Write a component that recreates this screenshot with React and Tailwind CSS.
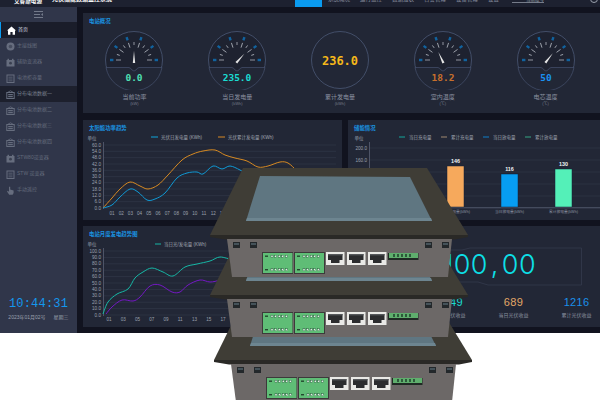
import { Fragment } from 'react';

const menuItems = [
  { label: '首页', icon: 'home', active: true },
  { label: '主接线图', icon: 'circle' },
  { label: '辅助变流器', icon: 'box' },
  { label: '电池柜容量', icon: 'cabinet' },
  { label: '分布电池数据一', icon: 'pack', dark: true },
  { label: '分布电池数据二', icon: 'pack' },
  { label: '分布电池数据三', icon: 'pack' },
  { label: '分布电池数据四', icon: 'pack' },
  { label: 'STW80逆变器', icon: 'box' },
  { label: 'STW 逆变器', icon: 'cabinet' },
  { label: '手动遥控', icon: 'hand' },
];

const gauges = [
  { value: '0.0', label: '当前功率', unit: '(kW)', color: '#4fe0b4', angle: 0 },
  { value: '235.0', label: '当日发电量', unit: '(kWh)', color: '#1adbd2', angle: 42 },
  { value: '236.0', label: '累计发电量', unit: '(kWh)', color: '#f6b81a', plain: true },
  { value: '18.2', label: '室内温度', unit: '(℃)', color: '#c8702c', angle: -25 },
  { value: '50', label: '电芯温度', unit: '(℃)', color: '#1a90f0', angle: 38 },
];

function MenuIcon({ type, active }) {
  const c = active ? '#ffffff' : '#666d7e';
  return (
    <svg width="9" height="9" viewBox="0 0 9 9" className="shrink-0">
      {type === 'home' && <path d="M4.5 .5 L9 4.6 L8 4.6 L8 8.8 L5.6 8.8 L5.6 6 L3.4 6 L3.4 8.8 L1 8.8 L1 4.6 L0 4.6 Z" fill={c} />}
      {type === 'circle' && (
        <g>
          <circle cx="4.5" cy="4.5" r="4" fill={c} />
          <circle cx="4.5" cy="4.5" r="1.8" fill="#474e60" />
        </g>
      )}
      {type === 'box' && (
        <g>
          <rect x=".5" y="2" width="8" height="6.5" fill={c} />
          <rect x="1.5" y=".8" width="1.5" height="1.4" fill={c} />
          <rect x="6" y=".8" width="1.5" height="1.4" fill={c} />
          <circle cx="4.5" cy="5.2" r="1.4" fill="#3a4051" />
        </g>
      )}
      {type === 'cabinet' && (
        <g>
          <rect x="1" y="1" width="7" height="7.5" fill="none" stroke={c} />
          <path d="M2.5 3.2 H6.5 M2.5 5 H6.5 M2.5 6.8 H6.5" stroke={c} strokeWidth=".7" />
        </g>
      )}
      {type === 'pack' && (
        <g>
          <path d="M1.5 2.5 L4.5 .8 L7.5 2.5" fill="none" stroke={c} strokeWidth=".8" />
          <rect x=".8" y="2.5" width="7.4" height="6" fill="none" stroke={c} />
          <rect x="2.2" y="4" width="4.6" height="1.2" fill={c} />
          <rect x="2.2" y="6" width="4.6" height="1.2" fill={c} />
        </g>
      )}
      {type === 'hand' && (
        <path d="M3 .8 H4.2 V3.6 L7.6 4.4 V7 L6.6 8.8 H3.2 L1 5.4 L1.8 4.8 L3 5.8 Z" fill={c} />
      )}
    </svg>
  );
}

function Sidebar() {
  return (
    <aside className="w-[77px] shrink-0 bg-[#30364a] flex flex-col">
      <div className="h-[15px] flex items-center justify-center">
        <svg width="9" height="7" viewBox="0 0 9 7">
          <path d="M0 .5 H9 M0 3.5 H6 M0 6.5 H9" stroke="#737a8a" fill="none" />
          <path d="M9 2 L7 3.5 L9 5 Z" fill="#737a8a" />
        </svg>
      </div>
      {menuItems.map((item) => (
        <div
          key={item.label}
          className={`h-[16px] flex items-center gap-[2px] pl-[6px] text-[5px] ${
            item.active
              ? 'bg-[#1a1d2a] border-l border-[#0a9bf0] pl-[5px] text-[#d8dbe2]'
              : item.dark
                ? 'bg-[#1d202d] text-[#7a8090]'
                : 'text-[#636a7b]'
          }`}
        >
          <MenuIcon type={item.icon} active={item.active} />
          <span className="whitespace-nowrap">{item.label}</span>
        </div>
      ))}
      <div className="mt-auto pb-[12px] flex flex-col items-center">
        <div className="font-['Liberation_Mono',monospace] text-[12px] leading-[14px] tracking-[0.2px] text-[#1497ee]">10:44:31</div>
        <div className="mt-[2px] flex gap-[8px] text-[5px] leading-[8px] text-[#9ba1ae]">
          <span>2023年01月02号</span>
          <span>星期三</span>
        </div>
      </div>
    </aside>
  );
}

function Gauge({ value, label, unit, color, angle, plain }) {
  const ticks = [];
  for (let a = -90; a <= 90; a += 18) ticks.push(a);
  const blue = [-90, -54, -18, 18, 54, 90];
  return (
    <div className="flex flex-col items-center">
      <svg width="60" height="60" viewBox="-30 -30 60 60">
        <circle r="28.5" fill={plain ? '#222736' : '#1e2230'} stroke="#46526e" strokeWidth=".9" />
        {!plain && (
          <Fragment>
            <path d="M-28 7.5 H-5 Q-3 8 -2 10 Q0 12 2 10 Q3 8 5 7.5 H28 A28.5 28.5 0 0 1 -28 7.5 Z" fill="#222736" stroke="#46526e" strokeWidth=".7" />
            {ticks.map((a) => (
              <line
                key={a}
                x1="0"
                y1={blue.includes(a) ? -13 : -15}
                x2="0"
                y2="-18"
                stroke="#aeb3bc"
                strokeWidth=".8"
                transform={`rotate(${a})`}
              />
            ))}
            {blue.map((a) => (
              <rect key={a} x="-1.2" y="-24" width="2.4" height="3.4" fill="#11639f" transform={`rotate(${a})`} />
            ))}
            <path d="M-1.2 3 L0 -9 L1.2 3 Z" fill="#e6e6e6" transform={`rotate(${angle} 0 2)`} />
            <text y="21" textAnchor="middle" fontSize="9.5" fontWeight="700" fill={color} className="font-['DejaVu_Sans_Mono',monospace]">
              {value}
            </text>
          </Fragment>
        )}
        {plain && (
          <text y="4.5" textAnchor="middle" fontSize="12" fontWeight="700" fill={color} className="font-['DejaVu_Sans_Mono',monospace]">
            {value}
          </text>
        )}
      </svg>
      <div className="mt-[3px] text-[6px] leading-[8px] text-[#8b91a0] whitespace-nowrap">{label}</div>
      <div className="text-[4px] leading-[6px] text-[#747a89]">{unit}</div>
    </div>
  );
}

function Card({ title, className = '', children }) {
  return (
    <section className={`relative bg-[#222736] overflow-hidden ${className}`}>
      <h2 className="h-[13px] pt-[3px] pl-[6px] text-[5.4px] leading-[10px] font-bold text-[#1a94e2] whitespace-nowrap">{title}</h2>
      {children}
    </section>
  );
}

// catmull-rom through the points read off the picture
function smooth(points) {
  let d = `M${points[0][0]} ${points[0][1]}`;
  for (let i = 0; i < points.length - 1; i++) {
    const p0 = points[i - 1] || points[i];
    const p1 = points[i];
    const p2 = points[i + 1];
    const p3 = points[i + 2] || p2;
    d += ` C${p1[0] + (p2[0] - p0[0]) / 6} ${p1[1] + (p2[1] - p0[1]) / 6} ${p2[0] - (p3[0] - p1[0]) / 6} ${p2[1] - (p3[1] - p1[1]) / 6} ${p2[0]} ${p2[1]}`;
  }
  return d;
}

const orange = [[103, 208], [112, 198], [120, 189], [130, 182], [140, 186], [148, 189], [158, 185], [168, 175], [182, 160], [193, 154], [203, 151], [215, 150], [225, 155], [235, 158], [247, 161], [258, 167], [268, 166], [280, 162], [288, 163], [296, 170]];
const blueLine = [[103, 208], [112, 205], [120, 197], [130, 189], [138, 192], [147, 200], [155, 199], [165, 193], [177, 178], [187, 173], [197, 172], [203, 174], [213, 166], [222, 169], [230, 166], [240, 170], [250, 176]];
const teal = [[103, 314], [108, 302], [117, 294], [128, 289], [135, 278], [143, 272], [152, 268], [163, 272], [173, 276], [185, 267], [197, 264], [210, 261], [220, 257], [232, 260]];
const purple = [[106, 314], [112, 307], [122, 300], [133, 301], [140, 297], [150, 286], [160, 285], [172, 292], [180, 292], [188, 285], [200, 280], [210, 282], [220, 280], [230, 276]];

function PowerChart() {
  const rows = [['60.0', 145], ['54.0', 151.3], ['48.0', 157.7], ['42.0', 164], ['36.0', 170.3], ['30.0', 176.7], ['24.0', 182.7], ['18.0', 189], ['12.0', 195.7], ['6.0', 201.7], ['0.0', 208]];
  const days = ['01', '02', '03', '04', '05', '06', '07', '08', '09', '10', '11', '12', '13', '14', '15', '16', '17', '18', '19', '20', '21', '22', '23', '24'];
  return (
    <svg width="259" height="87" viewBox="83 133 259 87" className="block">
      <text x="92" y="140" fontSize="4.5" fill="#9ba1ae" textAnchor="middle">单位</text>
      {rows.map(([t, y]) => (
        <Fragment key={t}>
          <line x1="104" x2="336" y1={y} y2={y} stroke="#343a4b" strokeWidth=".6" />
          <text x="101" y={y + 1.6} fontSize="4.6" fill="#9ba1ae" textAnchor="end">{t}</text>
        </Fragment>
      ))}
      <line x1="103.5" x2="103.5" y1="142" y2="209" stroke="#596073" strokeWidth=".8" />
      {days.map((t, i) => (
        <text key={t} x={112 + i * 9.2} y="214.5" fontSize="4.6" fill="#9ba1ae" textAnchor="middle">{t}</text>
      ))}
      <line x1="151" x2="158" y1="137" y2="137" stroke="#0fa6dc" />
      <text x="161" y="139" fontSize="4.5" fill="#a3a8b4">光伏日发电量 (KWh)</text>
      <line x1="218" x2="225" y1="137" y2="137" stroke="#d98a24" />
      <text x="228" y="139" fontSize="4.5" fill="#a3a8b4">光伏累计发电量 (KWh)</text>
      <path d={smooth(orange)} fill="none" stroke="#d78a22" strokeWidth="1" />
      <path d={smooth(blueLine)} fill="none" stroke="#0f9ad6" strokeWidth="1" />
    </svg>
  );
}

function MonthChart() {
  const rows = ['100.0', '90.0', '80.0', '70.0', '60.0', '50.0', '40.0', '30.0', '20.0', '10.0', '0.0'];
  const days = ['01', '03', '05', '07', '09', '11', '13', '15', '17', '19', '21', '23', '25', '27', '29', '31'];
  return (
    <svg width="259" height="88" viewBox="83 239 259 88" className="block">
      <text x="92" y="246" fontSize="4.5" fill="#9ba1ae" textAnchor="middle">单位</text>
      {rows.map((t, i) => (
        <Fragment key={t}>
          <line x1="104" x2="336" y1={251 + i * 6.4} y2={251 + i * 6.4} stroke="#343a4b" strokeWidth=".6" />
          <text x="101" y={252.6 + i * 6.4} fontSize="4.6" fill="#9ba1ae" textAnchor="end">{t}</text>
        </Fragment>
      ))}
      <line x1="103.5" x2="103.5" y1="248" y2="316" stroke="#596073" strokeWidth=".8" />
      {days.map((t, i) => (
        <text key={t} x={109 + i * 14.25} y="320.5" fontSize="4.6" fill="#9ba1ae" textAnchor="middle">{t}</text>
      ))}
      <line x1="155" x2="161" y1="244" y2="244" stroke="#16b5a4" />
      <text x="164" y="246" fontSize="4.5" fill="#a3a8b4">当日光/发电量 (KWh)</text>
      <path d={smooth(teal)} fill="none" stroke="#16b8a6" strokeWidth="1" />
      <path d={smooth(purple)} fill="none" stroke="#7418c4" strokeWidth="1" />
    </svg>
  );
}

function StorageChart() {
  const rows = [['200.0', 148], ['160.0', 160], ['120.0', 172], ['80.0', 184], ['40.0', 196], ['0.0', 207.5]];
  const legend = [
    [399, '#12a79b', '当日充电量'],
    [441, '#a08a70', '累计充电量'],
    [483, '#0f7ec8', '当日放电量'],
    [525, '#35a583', '累计放电量'],
  ];
  const bars = [
    { x: 393, top: 170, label: '', name: '当日充电量(kWh)', fill: '#12a79b' },
    { x: 447, top: 166, label: '146', name: '累计充电量(kWh)', fill: '#f6a95c' },
    { x: 501, top: 174, label: '116', name: '当日放电量(kWh)', fill: '#079df2' },
    { x: 555, top: 169, label: '130', name: '累计放电量(kWh)', fill: '#54f0b8' },
  ];
  return (
    <svg width="252" height="87" viewBox="348 133 252 87" className="block">
      <text x="359" y="140" fontSize="4.5" fill="#9ba1ae" textAnchor="middle">单位</text>
      {rows.map(([t, y]) => (
        <Fragment key={t}>
          <line x1="369" x2="600" y1={y} y2={y} stroke="#343a4b" strokeWidth=".6" />
          <text x="367" y={y + 1.6} fontSize="4.6" fill="#9ba1ae" textAnchor="end">{t}</text>
        </Fragment>
      ))}
      <line x1="369.5" x2="369.5" y1="142" y2="208" stroke="#596073" strokeWidth=".8" />
      <line x1="369" x2="600" y1="207.8" y2="207.8" stroke="#596073" strokeWidth=".8" />
      {legend.map(([x, c, t]) => (
        <Fragment key={t}>
          <line x1={x} x2={x + 6} y1="137" y2="137" stroke={c} />
          <text x={x + 10} y="139" fontSize="4.5" fill="#a3a8b4">{t}</text>
        </Fragment>
      ))}
      {bars.map((b) => (
        <Fragment key={b.x}>
          <rect x={b.x} y={b.top} width="17" height={207 - b.top} fill={b.fill} stroke="#14233a" strokeWidth=".5" />
          <text x={b.x + 8.5} y={b.top - 3.5} fontSize="5.4" fontWeight="700" fill="#f0f2f4" textAnchor="middle">{b.label}</text>
          <text x={b.x + 8.5} y="212.5" fontSize="3.8" fill="#8b91a0" textAnchor="middle">{b.name}</text>
        </Fragment>
      ))}
    </svg>
  );
}

function Income() {
  const stats = [
    { value: '1149', label: '当月光伏收益', color: 'text-[#1adbd2]' },
    { value: '689', label: '当日光伏收益', color: 'text-[#e2a866]' },
    { value: '1216', label: '累计光伏收益', color: 'text-[#1a90ea]' },
  ];
  return (
    <Fragment>
      <div className="relative h-[49px] flex justify-end pr-[64px]">
        <svg width="252" height="49" viewBox="348 239 252 49" className="absolute left-0 top-0">
          <path d="M470 248 H581.5 V285 H488 L478 282 H440 M470 248 L462 250 H440" fill="none" stroke="#333a4c" strokeWidth=".8" />
        </svg>
        <div className="relative mt-[12px] font-['Inter',sans-serif] font-light text-[27px] leading-[28px] tracking-[0.4px] text-[#0de0e8] whitespace-nowrap">
          100<span className="mx-[3px]">,</span>00
        </div>
      </div>
      <div className="absolute left-[71px] top-[70px] grid grid-cols-3 w-[189px]">
        {stats.map((s) => (
          <div key={s.label} className="flex flex-col items-center">
            <div className={`text-[11px] leading-[12px] tracking-[0.3px] font-['Liberation_Sans',sans-serif] ${s.color}`}>{s.value}</div>
            <div className="mt-[3px] text-[5px] leading-[8px] text-[#8b91a0] whitespace-nowrap">{s.label}</div>
          </div>
        ))}
      </div>
    </Fragment>
  );
}

function Terminal({ x, y, w, h }) {
  const dots = [0, 1, 2, 3, 4];
  return (
    <g>
      <rect x={x} y={y} width={w} height={h} fill="#5fbd76" />
      {dots.map((i) => (
        <Fragment key={i}>
          <rect x={x + 8 + i * 3.6} y={y + 2.2} width="2" height="2" fill="#e3eee5" stroke="#27533a" strokeWidth=".4" />
          <rect x={x + 8 + i * 3.6} y={y + h - 4.2} width="2" height="2" fill="#e3eee5" stroke="#27533a" strokeWidth=".4" />
        </Fragment>
      ))}
      <rect x={x + 2} y={y + 2.5} width="3" height="1.4" fill="#24472f" />
      <rect x={x + 2} y={y + h - 4} width="3" height="1.4" fill="#24472f" />
    </g>
  );
}

function Rj45({ x }) {
  return (
    <g>
      <rect x={x} y="252" width="18.5" height="13" fill="#e9e9e6" />
      <path d={`M${x + 2} 254 H${x + 16.5} V260 L${x + 13.5} 260 V263 H${x + 5} V260 H${x + 2} Z`} fill="#2b2c2e" />
      <rect x={x + 2} y="254" width="14.5" height="1.4" fill="#55585b" />
    </g>
  );
}

function Device({ dx = 0, dy = 0 }) {
  return (
    <g transform={`translate(${dx} ${dy})`}>
      <polygon points="243,168 427,168 468,235 210,235" fill="#3f3d36" />
      <polygon points="260,176 410,177 432,221 246,221" fill="#5f7681" />
      <polygon points="247,218 431,218 432,221 246,221" fill="#6d8590" />
      <polygon points="210,235 468,235 468,237 455,239.5 225,239.5 210,237" fill="#2a2926" />
      <polygon points="227,239 452,239 448,277 232,277" fill="#6c6867" />
      {[233, 250, 425, 442].map((x) => (
        <g key={x}>
          <rect x={x} y="242" width="7" height="6" fill="#23282b" />
          <rect x={x + 1} y="243" width="5" height="2" fill="#45535a" />
        </g>
      ))}
      <rect x="262" y="252" width="31" height="22" fill="#3c3a3a" />
      <rect x="294" y="252" width="31" height="22" fill="#3c3a3a" />
      <Terminal x={263} y={253} w={29.5} h={20} />
      <Terminal x={295} y={253} w={29} h={20} />
      <Rj45 x={326} />
      <Rj45 x={347} />
      <Rj45 x={368} />
      <rect x="388" y="253" width="30.5" height="7" fill="#1f2a24" />
      <rect x="389" y="253" width="29" height="5" fill="#5fae6d" />
      {[0, 1, 2, 3, 4].map((i) => (
        <rect key={i} x={393 + i * 4} y="254" width="2" height="3" fill="#2d5a3a" />
      ))}
    </g>
  );
}

export default function App() {
  return (
    <div className="relative w-[600px] h-[400px] overflow-hidden bg-white font-['Liberation_Sans','Noto_Sans_CJK_SC',sans-serif]">
      <div className="h-[333px] flex flex-col bg-[#11131f]">
        <header className="h-[7px] shrink-0 bg-[#1d2130] flex overflow-hidden text-white">
          <div className="w-[52px] pl-[14px] -mt-[3px] text-[5.6px] leading-[8px] font-bold whitespace-nowrap">艾睿斯电源</div>
          <div className="w-[243px] -mt-[5px] text-[6px] leading-[8px] font-bold whitespace-nowrap">光伏储能数据监控系统</div>
          <div className="w-[27px] bg-[#0a9bf0]"></div>
          <div className="w-[190px] pl-[6px] -mt-[5px] flex gap-[10px] text-[5.5px] leading-[8px] text-[#8a90a0] whitespace-nowrap">
            <span>系统概况</span>
            <span>运行监控</span>
            <span>数据报表</span>
            <span>告警管理</span>
            <span>设备管理</span>
            <span>设置</span>
          </div>
          <div className="w-[32px] h-[3px] flex gap-[2px] border-b border-[#767c8a]">
            <span className="-mt-[4px] text-[4.5px] leading-[8px] text-[#9ba1ae] whitespace-nowrap pl-[14px]">当前账号</span>
          </div>
          <div className="ml-auto mr-[2px] -mt-[5px] w-[8px] h-[8px] rounded-full border border-[#9ba1ae]"></div>
        </header>
        <div className="flex flex-1 min-h-0">
          <Sidebar />
          <main className="flex-1 pl-[6px] pt-[6px] flex flex-col overflow-hidden">
            <Card title="电站概况" className="h-[100px] shrink-0">
              <div className="grid grid-cols-5 w-[514px] mt-[4px]">
                {gauges.map((g) => (
                  <Gauge key={g.label} {...g} />
                ))}
              </div>
            </Card>
            <div className="mt-[7px] grid grid-cols-[259px_252px] gap-x-[6px] gap-y-[6px] grid-rows-[100px_101px]">
              <Card title="太阳能功率趋势">
                <PowerChart />
              </Card>
              <Card title="储能情况">
                <StorageChart />
              </Card>
              <Card title="电站月度发电趋势图">
                <MonthChart />
              </Card>
              <Card title="">
                <Income />
              </Card>
            </div>
          </main>
        </div>
      </div>
      {/* stacked hardware photo lying over the dashboard */}
      <svg width="600" height="400" viewBox="0 0 600 400" className="absolute left-0 top-0">
        <Device dx={4} dy={125} />
        <Device dy={60} />
        <Device />
      </svg>
    </div>
  );
}
